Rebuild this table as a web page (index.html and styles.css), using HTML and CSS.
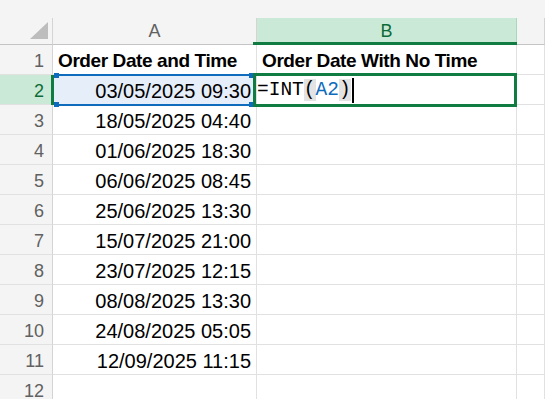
FILE: index.html
```html
<!DOCTYPE html>
<html>
<head>
<meta charset="utf-8">
<link rel="stylesheet" href="styles.css">
</head>
<body>
<div class="sheet">
  <div class="topbar"></div>
  <div class="row head">
    <div class="corner"><svg width="18" height="17" viewBox="0 0 18 17"><polygon points="18,0 18,17 0,17" fill="#bdbdbd"/></svg></div>
    <div class="colh">A</div>
    <div class="colh sel">B</div>
    <div class="colh"></div>
  </div>
  <div class="row">
    <div class="rowh">1</div>
    <div class="cell bold">Order Date and Time</div>
    <div class="cell bold">Order Date With No Time</div>
    <div class="cell"></div>
  </div>
  <div class="row">
    <div class="rowh sel">2</div>
    <div class="cell num ref-cell">03/05/2025 09:30<div class="ref"><span class="h tl"></span><span class="h tr"></span><span class="h bl"></span><span class="h br"></span></div></div>
    <div class="cell active"><span class="formula">=INT<span class="paren">(</span><span class="refname">A2</span><span class="paren">)</span></span><span class="caret"></span></div>
    <div class="cell"></div>
  </div>
  <div class="row"><div class="rowh">3</div><div class="cell num">18/05/2025 04:40</div><div class="cell"></div><div class="cell"></div></div>
  <div class="row"><div class="rowh">4</div><div class="cell num">01/06/2025 18:30</div><div class="cell"></div><div class="cell"></div></div>
  <div class="row"><div class="rowh">5</div><div class="cell num">06/06/2025 08:45</div><div class="cell"></div><div class="cell"></div></div>
  <div class="row"><div class="rowh">6</div><div class="cell num">25/06/2025 13:30</div><div class="cell"></div><div class="cell"></div></div>
  <div class="row"><div class="rowh">7</div><div class="cell num">15/07/2025 21:00</div><div class="cell"></div><div class="cell"></div></div>
  <div class="row"><div class="rowh">8</div><div class="cell num">23/07/2025 12:15</div><div class="cell"></div><div class="cell"></div></div>
  <div class="row"><div class="rowh">9</div><div class="cell num">08/08/2025 13:30</div><div class="cell"></div><div class="cell"></div></div>
  <div class="row"><div class="rowh">10</div><div class="cell num">24/08/2025 05:05</div><div class="cell"></div><div class="cell"></div></div>
  <div class="row"><div class="rowh">11</div><div class="cell num">12/09/2025 11:15</div><div class="cell"></div><div class="cell"></div></div>
  <div class="row"><div class="rowh">12</div><div class="cell"></div><div class="cell"></div><div class="cell"></div></div>
</div>
</body>
</html>
```
FILE: styles.css
```css
* { box-sizing: border-box; }
html, body { margin: 0; padding: 0; background: #ffffff; overflow: hidden; }
body { font-family: "Liberation Sans", Arial, sans-serif; color: #000; }
.sheet { width: 545px; height: 399px; overflow: hidden; }
.topbar { height: 18px; background: #f4f4f4; }
.row {
  display: grid;
  grid-template-columns: 53px 204px 260px 1fr;
  height: 30px;
}
.row.head { height: 27px; background: #f4f4f4; }
.corner {
  display: flex;
  justify-content: flex-end;
  align-items: flex-end;
  padding: 0 4px 5px 0;
  border-right: 1px solid #d4d4d4;
  border-bottom: 1px solid #c4c4c4;
}
.colh {
  position: relative;
  display: flex;
  align-items: center;
  justify-content: center;
  font-size: 18px;
  color: #616161;
  border-right: 1px solid #d4d4d4;
  border-bottom: 1px solid #c4c4c4;
  padding-top: 1px;
}
.colh.sel { background: #caead7; color: #0e6b38; border-right-color: #a9d8bb; }
.colh.sel::after {
  content: "";
  position: absolute;
  left: -4px;
  right: -1px;
  bottom: -1px;
  height: 3px;
  background: #107c41;
  z-index: 2;
}
.rowh {
  position: relative;
  display: flex;
  align-items: center;
  justify-content: flex-end;
  padding: 4px 8px 0 0;
  background: #f4f4f4;
  color: #616161;
  font-size: 18px;
  border-right: 1px solid #d4d4d4;
  border-bottom: 1px solid #e1e1e1;
}
.rowh.sel { background: #caead7; color: #0e6b38; }
.rowh.sel::after {
  content: "";
  position: absolute;
  right: -2px;
  top: 0;
  bottom: -1px;
  width: 3px;
  background: #107c41;
  z-index: 2;
}
.cell {
  position: relative;
  display: flex;
  align-items: center;
  border-right: 1px solid #e1e1e1;
  border-bottom: 1px solid #e1e1e1;
  white-space: nowrap;
  padding-top: 3px;
}
.cell.bold {
  font-weight: bold;
  font-size: 19px;
  letter-spacing: -0.4px;
  padding-left: 5px;
}
.cell.num {
  justify-content: flex-end;
  font-size: 20px;
  padding-right: 5px;
}
.ref-cell { background: #e6eef9; }
.ref {
  position: absolute;
  left: 2px;
  right: 3px;
  top: -1px;
  bottom: -2px;
  border-top: 2px solid #0f6cbd;
  border-bottom: 2px solid #0f6cbd;
}
.h { position: absolute; width: 5px; height: 5px; background: #0f6cbd; }
.h.tl { left: -1px; top: -3px; }
.h.tr { right: -1px; top: -3px; }
.h.bl { left: -1px; bottom: -3px; }
.h.br { right: -1px; bottom: -3px; }
.cell.active { padding-left: 0; padding-top: 2px; }
.cell.active::after {
  content: "";
  position: absolute;
  left: -4px;
  right: -1px;
  top: -2px;
  bottom: -3px;
  border: 3px solid #107c41;
  z-index: 3;
}
.formula {
  font-family: "Liberation Mono", "DejaVu Sans Mono", monospace;
  font-size: 19.5px;
  line-height: 25px;
}
.paren { background: #e3e3e3; }
.refname { color: #0f6cbd; }
.caret {
  display: inline-block;
  width: 2px;
  height: 25px;
  background: #000;
  margin-left: 1px;
}
```
